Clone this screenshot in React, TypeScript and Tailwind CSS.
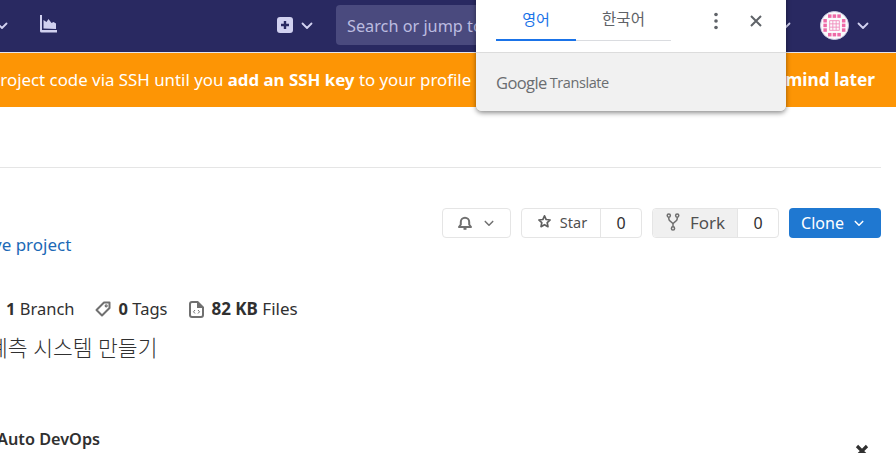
const sans = { fontFamily: '"Noto Sans", "Noto Sans CJK KR", sans-serif' }

function Chevron({ className }: { className: string }) {
  return (
    <svg className={className} viewBox="0 0 12 8" fill="none" stroke="currentColor" strokeWidth="1.8" strokeLinecap="round" strokeLinejoin="round">
      <path d="M1.5 1.5 6 6l4.5-4.5" />
    </svg>
  )
}

function Avatar() {
  const outer = [0, 1, 2, 3, 4]
  return (
    <svg className="w-[29px] h-[29px]" viewBox="0 0 30 30">
      <circle cx="15" cy="15" r="14.5" fill="#fbfbfd" stroke="#c9c9e0" />
      {outer.map(r =>
        outer.map(c =>
          (r === 0 || r === 4 || c === 0 || c === 4) && !((r === 0 || r === 4) && (c === 0 || c === 4)) ? (
            <rect key={`${r}-${c}`} x={3.500 + c * 4.8} y={3.500 + r * 4.8} width="3.600" height="3.600" fill="#ee6aa7" />
          ) : null
        )
      )}
      <path d="M10 10h10v10H10z M13.3 10v10 M16.7 10v10 M10 13.3h10 M10 16.7h10" fill="none" stroke="#f08bbb" strokeWidth="0.9" />
    </svg>
  )
}

export default function App() {
  return (
    <div className="relative w-[896px] h-[453px] overflow-hidden bg-white text-[#303030]" style={sans}>
      {/* Top nav */}
      <header className="h-[53px] bg-[#292961] border-b border-[#e5e5ee] flex items-center text-[#d1d1f0]">
        <Chevron className="w-3 h-2 ml-[-4px]" />
        <svg className="w-[18px] h-[18px] ml-[31px] mb-[4px]" viewBox="0 0 18 18" fill="currentColor">
          <path d="M1 0h2v15h15v2.5H2.5A1.5 1.5 0 0 1 1 16z" />
          <path d="M4.5 13.5V5l3 2 2-3 3 4 2-1 2.5 1.5v5.5z" />
        </svg>
        <svg className="w-4 h-4 ml-[220px] mb-[2px]" viewBox="0 0 16 16">
          <rect width="16" height="16" rx="3" fill="currentColor" />
          <path d="M8 4v8M4 8h8" stroke="#292961" strokeWidth="2.4" />
        </svg>
        <Chevron className="w-3 h-2 ml-2" />
        <div className="ml-[23px] w-[200px] h-10 mb-[3px] rounded bg-[#4a4a7e] flex items-center pl-[11px] pt-[4px] text-[16.25px] text-[#bcbce0] whitespace-nowrap overflow-hidden">
          Search or jump to…
        </div>
        <Chevron className="w-3 h-2 ml-auto mr-[-4px]" />
        <div className="ml-[33px] mb-[2px]">
          <Avatar />
        </div>
        <Chevron className="w-3 h-2 ml-2 mr-[27px]" />
      </header>

      {/* SSH warning banner */}
      <div className="h-[54px] bg-[#fd9505] flex items-center justify-between text-white text-[16.85px] whitespace-nowrap pb-[1px] pr-[21px]">
        <p className="ml-[-10px]">
          project code via SSH until you <b className="font-bold">add an SSH key</b> to your profile
        </p>
        <b className="font-bold text-[17.25px]">Remind later</b>
      </div>

      {/* Breadcrumb strip */}
      <div className="h-[61px] mr-[15px] border-b border-[#e5e5e5]" />

      {/* Project header */}
      <div className="flex justify-between items-start pt-[40px] pr-[15px]">
        <a className="mt-[25px] ml-[-7px] text-[17px] leading-6 text-[#1b69b6] whitespace-nowrap">ve project</a>
        <div className="flex gap-[10px]">
          <button className="w-[69px] h-[30px] rounded border border-[#e5e5e5] flex items-center justify-center gap-[12px] pr-[2px] text-[#707070]">
            <svg className="w-[14px] h-[14px]" viewBox="0 0 14 14" fill="none" stroke="currentColor" strokeWidth="2">
              <path d="M1 11h12l-1.8-2.5V6a4.2 4.2 0 0 0-8.4 0v2.500z" strokeLinejoin="round" />
              <path d="M5.500 12.800h3" />
            </svg>
            <Chevron className="w-[10px] h-[7px]" />
          </button>
          <div className="flex h-[30px] rounded border border-[#e5e5e5]">
            <button className="w-[78px] pl-[2px] flex items-center justify-center gap-[8px] text-[14.5px] text-[#505050]">
              <svg className="w-[15px] h-[15px] mb-[3px] text-[#5e5e5e]" viewBox="0 0 16 16" fill="none" stroke="currentColor" strokeWidth="1.8" strokeLinejoin="round">
                <path d="m8 2 1.800 3.900 4.200.5-3.100 2.900.8 4.200L8 11.400l-3.700 2.100.8-4.200L2 6.400l4.200-.5z" />
              </svg>
              Star
            </button>
            <span className="w-[41px] border-l border-[#e5e5e5] flex items-center justify-center text-[16px]">0</span>
          </div>
          <div className="flex h-[30px] rounded border border-[#e5e5e5]">
            <button className="w-[84px] pl-[1px] bg-[#f0f0f0] rounded-l flex items-center justify-center gap-[10px] text-[17px] text-[#505050]">
              <svg className="w-[14px] h-[18px] mb-[3px] text-[#6e6e6e]" viewBox="0 0 14 18" fill="none" stroke="currentColor" strokeWidth="1.5">
                <circle cx="2.800" cy="2.600" r="1.600" />
                <circle cx="11.200" cy="2.600" r="1.600" />
                <circle cx="7" cy="15.400" r="1.600" />
                <path d="M2.800 4.200v1.800c0 2.500 4.200 3 4.200 5v2.800M11.200 4.200v1.800c0 2.500-4.200 3-4.200 5" />
              </svg>
              Fork
            </button>
            <span className="w-[41px] border-l border-[#e5e5e5] flex items-center justify-center text-[16px]">0</span>
          </div>
          <button className="w-[92px] h-[30px] pr-[5px] rounded bg-[#1f78d1] text-white text-[16px] flex items-center justify-center gap-[10px]">
            Clone
            <Chevron className="w-[10px] h-[7px]" />
          </button>
        </div>
      </div>

      {/* Stats */}
      <div className="flex items-center h-6 mt-[40px] text-[16.5px] whitespace-nowrap">
        <span className="ml-[6px]">
          <b className="font-bold">1</b> Branch
        </span>
        <svg className="w-4 h-4 ml-[20px] text-[#707070]" viewBox="0 0 16 16" fill="none" stroke="currentColor" strokeWidth="2" strokeLinejoin="round">
          <path d="M9 1.500h5.500V7L7 14.500 1.500 9z" />
          <circle cx="11.200" cy="4.800" r=".6" />
        </svg>
        <span className="ml-[8px]">
          <b className="font-bold">0</b> Tags
        </span>
        <svg className="w-[15px] h-[17px] ml-[22px] text-[#707070]" viewBox="0 0 15 17">
          <path d="M3 0h6l6 6v8a3 3 0 0 1-3 3H3a3 3 0 0 1-3-3V3a3 3 0 0 1 3-3z" fill="currentColor" />
          <path d="M2 3a1 1 0 0 1 1-1h5v5h5v7a1 1 0 0 1-1 1H3a1 1 0 0 1-1-1z" fill="#fff" />
          <path d="M6 9 4.500 10.800 6 12.500M9 9l1.500 1.800L9 12.500" fill="none" stroke="currentColor" />
        </svg>
        <span className="ml-[7px] text-[17px]">
          <b className="font-bold">82 KB</b> Files
        </span>
      </div>

      {/* Description */}
      <p className="ml-[-12px] mt-[14px] text-[21.5px] leading-[26px] font-light whitespace-nowrap">계측 시스템 만들기</p>

      {/* Settings row */}
      <div className="flex justify-between mt-[66px] pr-[27px] h-6 items-center whitespace-nowrap">
        <b className="font-semibold ml-[-3px] text-[16.25px]">Auto DevOps</b>
        <svg className="w-[14px] h-[14px] mt-[24px] text-[#303030]" viewBox="0 0 14 14" fill="none" stroke="currentColor" strokeWidth="3.200">
          <path d="m2 2 10 10M12 2 2 12" />
        </svg>
      </div>

      {/* Google Translate popup */}
      <div className="absolute left-[476px] top-[-10px] w-[310px] h-[121px] bg-white rounded-b-md shadow-[0_2px_5px_rgba(0,0,0,0.45)] flex flex-col overflow-hidden">
        <div className="h-[63px] flex items-start shrink-0 border-b border-[#dcdcdc]">
          <div className="ml-5 mt-[9px] flex w-[175px] h-[42px] border-b border-[#dadce0]">
            <span className="w-20 h-[42px] pt-[1px] border-b-2 border-[#1a73e8] mb-[-1px] flex items-center justify-center text-[#1a73e8] text-[15px]">영어</span>
            <span className="w-[95px] pt-[1px] flex items-center justify-center text-[#5f6368] text-[15.5px]">한국어</span>
          </div>
          <svg className="w-1 h-[18px] ml-[43px] mt-[22px] text-[#5f6368]" viewBox="0 0 4 18" fill="currentColor">
            <circle cx="2" cy="2.500" r="1.800" />
            <circle cx="2" cy="9" r="1.800" />
            <circle cx="2" cy="15.500" r="1.800" />
          </svg>
          <svg className="w-3 h-3 ml-[32px] mt-[25px] text-[#5f6368]" viewBox="0 0 12 12" fill="none" stroke="currentColor" strokeWidth="2">
            <path d="m1 1 10 10M11 1 1 11" />
          </svg>
        </div>
        <div className="flex-1 bg-[#f1f1f1] flex items-center pl-5 pt-[2px] text-[#6a6d70] whitespace-nowrap" style={{ fontFamily: '"Open Sans", sans-serif' }}>
          <span className="text-[16.500px] tracking-[-0.6px]">Google</span>
          <span className="text-[14.500px] tracking-[-0.4px] ml-[3px]">Translate</span>
        </div>
      </div>
    </div>
  )
}
